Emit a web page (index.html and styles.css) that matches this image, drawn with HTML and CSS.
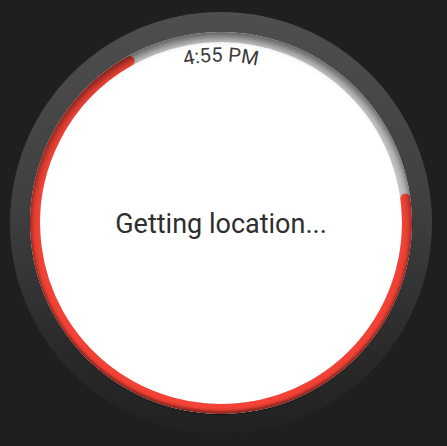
FILE: index.html
```html
<!DOCTYPE html>
<html>
<head>
<meta charset="utf-8">
<link rel="stylesheet" href="styles.css">
</head>
<body>
<div class="watch">
  <div class="screen">
    <svg class="ring" width="382" height="382" viewBox="0 0 382 382">
      <circle class="track" cx="191" cy="191" r="186"/>
      <circle class="progress" cx="191" cy="191" r="186" transform="rotate(-7.5 191 191)"/>
      <path id="timeArc" d="M 29.5 191 A 161.5 161.5 0 0 1 352.5 191" fill="none"/>
      <text class="time"><textPath href="#timeArc" startOffset="50%" text-anchor="middle">4:55 PM</textPath></text>
    </svg>
    <div class="status">Getting location...</div>
  </div>
</div>
</body>
</html>
```

FILE: styles.css
```css
html, body {
  margin: 0;
  padding: 0;
}
body {
  background: #1f1f1f;
  width: 447px;
  height: 446px;
  overflow: hidden;
  font-family: Roboto, "Noto Sans", sans-serif;
}
.watch {
  width: 422px;
  height: 422px;
  margin: 12px 0 0 10px;
  border-radius: 50%;
  box-sizing: border-box;
  padding: 20px;
  background: linear-gradient(to bottom, #4e4e4e 0%, #404040 45%, #2a2a2a 80%, #212121 100%);
}
.screen {
  position: relative;
  width: 382px;
  height: 382px;
  border-radius: 50%;
  background: #ffffff;
  display: flex;
  align-items: center;
  justify-content: center;
  box-shadow: 0 1px 1px rgba(0,0,0,0.4);
}
.ring {
  position: absolute;
  left: 0;
  top: 0;
  border-radius: 50%;
}
.track {
  fill: none;
  stroke: #c6c6c6;
  stroke-width: 10;
}
.progress {
  fill: none;
  stroke: #f44336;
  stroke-width: 10;
  stroke-linecap: round;
  stroke-dasharray: 805 1200;
}
.time {
  font-family: Roboto, "Noto Sans", sans-serif;
  font-size: 20px;
  fill: #3c3c3c;
}
.status {
  position: relative;
  font-size: 27px;
  color: #2e2e2e;
  margin-top: 2px;
}
.screen::after {
  content: "";
  position: absolute;
  inset: 0;
  border-radius: 50%;
  box-shadow: inset 0 5px 8px rgba(0,0,0,0.55), inset 0 -3px 3px rgba(0,0,0,0.4);
  pointer-events: none;
}
```
